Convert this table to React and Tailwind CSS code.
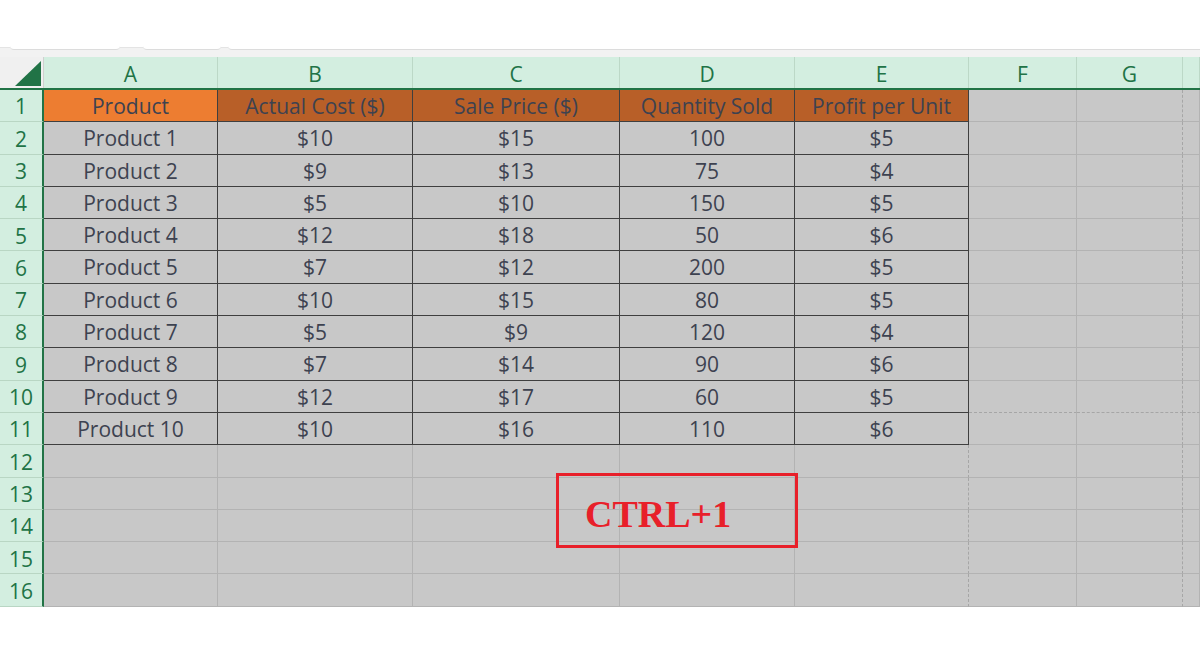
import React from "react";

const cols = [
  { key: "A", w: "w-[174px]" },
  { key: "B", w: "w-[195px]" },
  { key: "C", w: "w-[207px]" },
  { key: "D", w: "w-[175px]" },
  { key: "E", w: "w-[174px]" },
  { key: "F", w: "w-[108px]" },
  { key: "G", w: "w-[106px]" },
  { key: "", w: "flex-1" },
];

const header = ["Product", "Actual Cost ($)", "Sale Price ($)", "Quantity Sold", "Profit per Unit"];

const data = [
  ["Product 1", "$10", "$15", "100", "$5"],
  ["Product 2", "$9", "$13", "75", "$4"],
  ["Product 3", "$5", "$10", "150", "$5"],
  ["Product 4", "$12", "$18", "50", "$6"],
  ["Product 5", "$7", "$12", "200", "$5"],
  ["Product 6", "$10", "$15", "80", "$5"],
  ["Product 7", "$5", "$9", "120", "$4"],
  ["Product 8", "$7", "$14", "90", "$6"],
  ["Product 9", "$12", "$17", "60", "$5"],
  ["Product 10", "$10", "$16", "110", "$6"],
];

function Cell({ col, ci, ri }) {
  const inTable = ri < 11 && ci < 5;
  let text = "";
  if (inTable) text = ri === 0 ? header[ci] : data[ri - 1][ci];

  let bg = "bg-[#c8c8c8]";
  if (ri === 0 && ci === 0) bg = "bg-[#ed7d31]";
  else if (ri === 0 && ci < 5) bg = "bg-[#b85f28]";

  let rightBorder = "border-r border-r-[#b3b3b3]";
  if (inTable) rightBorder = "border-r border-r-[#3f3f3f]";
  else if (ci === 4 || ci === 6) rightBorder = "border-r border-r-[#a6a6a6] [border-right-style:dashed]";

  let bottomBorder = "border-b border-b-[#b3b3b3]";
  if (inTable) bottomBorder = "border-b border-b-[#3f3f3f]";
  else if (ri === 9 && ci >= 5) bottomBorder = "border-b border-b-[#a6a6a6] [border-bottom-style:dashed]";

  return (
    <div
      className={`${col.w} ${bg} ${rightBorder} ${bottomBorder} h-full flex items-center justify-center pt-[2px] text-[21px] text-[#3d4250] whitespace-nowrap overflow-hidden`}
    >
      {text}
    </div>
  );
}

export default function App() {
  const rows = Array.from({ length: 16 }, (_, i) => i);

  return (
    <div className="relative w-[1200px] h-[657px] bg-white overflow-hidden font-['Open_Sans','Noto_Sans',sans-serif]">
      <div className="h-[47px] bg-white" />

      {/* formula bar bottom edge */}
      <div className="h-[10px] bg-[#f2f2f2] relative border-t border-[#e4e4e4]">
        <div className="absolute left-[10px] top-[-2px] w-[110px] h-[4px] bg-white rounded-b border-b border-[#dcdcdc]" />
        <div className="absolute left-[143px] top-[-2px] w-[78px] h-[4px] bg-white rounded-b border-b border-[#dcdcdc]" />
        <div className="absolute left-[228px] top-[-2px] w-[972px] h-[4px] bg-white rounded-bl border-b border-[#dcdcdc]" />
      </div>

      {/* column headers */}
      <div className="flex h-[33px] bg-[#d3eee0] border-b-2 border-[#217346]">
        <div className="w-[44px] relative bg-[#f0f0f0] border-r border-[#d0d0d0]">
          <svg className="absolute left-[15px] top-[4px]" width="26" height="25" viewBox="0 0 26 25">
            <polygon points="26,0 26,25 0,25" fill="#217346" />
          </svg>
        </div>
        {cols.map((c, i) => (
          <div
            key={i}
            className={`${c.w} flex items-center justify-center pt-[5px] text-[21px] text-[#217346] border-r border-[#bcd8c7]`}
          >
            {c.key}
          </div>
        ))}
      </div>

      {/* rows */}
      <div className="flex flex-col">
        {rows.map((ri) => (
          <div key={ri} className="flex h-[32.3px]">
            <div className="w-[44px] shrink-0 bg-[#d3eee0] border-r-2 border-r-[#217346] border-b border-b-[#b9d6c4] flex items-center justify-center pt-[3px] text-[21px] text-[#217346]">
              {ri + 1}
            </div>
            {cols.map((c, ci) => (
              <Cell key={ci} col={c} ci={ci} ri={ri} />
            ))}
          </div>
        ))}
      </div>

      {/* shortcut callout */}
      <div className="absolute left-[556px] top-[473px] w-[242px] h-[75px] border-[3px] border-[#e8202a] flex items-center pl-[26px] pt-[6px]">
        <span className="font-['Liberation_Serif',serif] font-bold text-[38px] text-[#e8202a] leading-none">
          CTRL+1
        </span>
      </div>
    </div>
  );
}
